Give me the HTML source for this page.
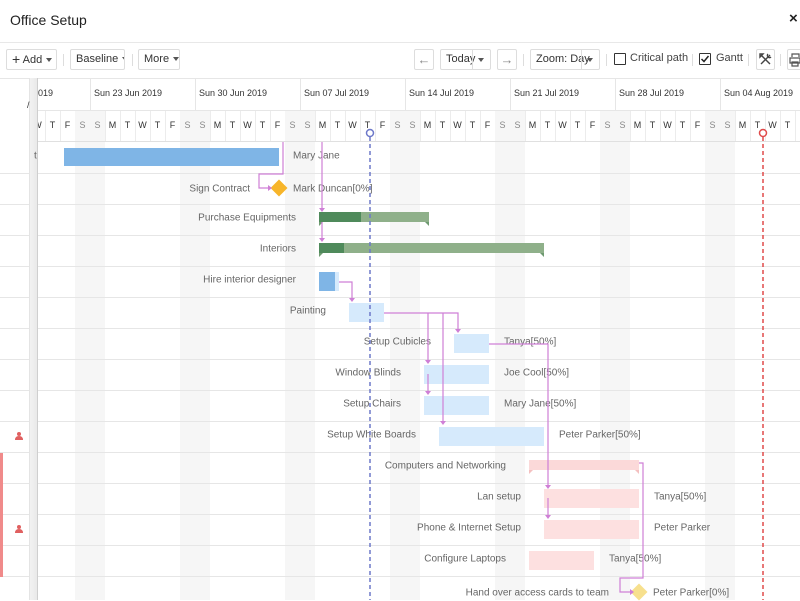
<!DOCTYPE html>
<html><head><meta charset="utf-8">
<style>
*{box-sizing:border-box;margin:0;padding:0}
body{width:800px;height:600px;overflow:hidden;background:#fff;font-family:"Liberation Sans",Arial,sans-serif;position:relative;color:#333}
.a{position:absolute}
.btn{position:absolute;top:49px;height:21px;border:1px solid #ddd;background:#fff;font-size:11px;color:#333;line-height:19px;padding-left:5px;border-radius:2px;white-space:nowrap;overflow:hidden}
.sep{position:absolute;top:54px;width:1px;height:12px;background:#ddd}
.car{display:inline-block;width:0;height:0;border-left:3.5px solid transparent;border-right:3.5px solid transparent;border-top:4px solid #555;vertical-align:middle;margin-left:4px}
.t{position:absolute;font-size:10px;color:#666;white-space:nowrap;transform:translateY(-50%)}
.tr{text-align:right}
.hd{position:absolute;font-size:9px;color:#333;top:88px;white-space:nowrap}
.dl{position:absolute;font-size:9px;top:120px;width:15px;text-align:center;color:#333}
</style></head><body>
<div class="a" style="left:10px;top:12px;font-size:14px;color:#222">Office Setup</div>
<div class="a" style="left:789px;top:10px;font-size:15px;color:#222;font-weight:bold">×</div>
<div class="a" style="left:0;top:42px;width:800px;height:1px;background:#e8e8e8"></div>

<div class="btn" style="left:6px;width:51px"><span style="font-size:14px;vertical-align:-1px">+</span> Add<span class="car"></span></div>
<div class="sep" style="left:63px"></div>
<div class="btn" style="left:70px;width:55px">Baseline<span class="car"></span></div>
<div class="sep" style="left:132px"></div>
<div class="btn" style="left:138px;width:42px">More<span class="car"></span></div>

<div class="btn" style="left:414px;width:20px;padding:0;text-align:center;color:#888;font-size:13px">←</div>
<div class="btn" style="left:440px;width:51px">Today</div>
<div class="a" style="left:472px;top:50px;width:1px;height:19px;background:#ddd"></div>
<div class="a" style="left:474px;top:50px;line-height:19px"><span class="car"></span></div>
<div class="btn" style="left:497px;width:20px;padding:0;text-align:center;color:#888;font-size:13px">→</div>
<div class="sep" style="left:523px"></div>
<div class="btn" style="left:530px;width:70px">Zoom: Day</div>
<div class="a" style="left:581px;top:50px;width:1px;height:19px;background:#ddd"></div>
<div class="a" style="left:583px;top:50px;line-height:19px"><span class="car"></span></div>
<div class="sep" style="left:606px"></div>
<div class="a" style="left:614px;top:53px;width:12px;height:12px;border:1.5px solid #333;border-radius:1px"></div>
<div class="a" style="left:630px;top:52px;font-size:11px;color:#444">Critical path</div>
<div class="sep" style="left:692px"></div>
<div class="a" style="left:699px;top:53px;width:12px;height:12px;border:1.5px solid #333;border-radius:1px"></div>
<svg class="a" style="left:699px;top:53px" width="12" height="12"><path d="M2.5 6 L5 8.5 L9.5 3" stroke="#222" stroke-width="1.5" fill="none"/></svg>
<div class="a" style="left:716px;top:52px;font-size:11px;color:#444">Gantt</div>
<div class="sep" style="left:748px"></div>
<div class="btn" style="left:756px;width:19px;padding:0"></div>
<svg class="a" style="left:758px;top:52px" width="15" height="15"><path d="M3 3 L12 12 M12 3 L3 12 M2 2 l3 0 l-3 3z M10 2 a2 2 0 1 0 3 3" stroke="#444" stroke-width="1.4" fill="none"/></svg>
<div class="sep" style="left:780px"></div>
<div class="btn" style="left:787px;width:20px;padding:0"></div>
<svg class="a" style="left:789px;top:53px" width="12" height="14"><path d="M3 4 V1 H10 V4 M1 5 H11 V10 H1Z M3 9 H9 V13 H3Z" stroke="#555" stroke-width="1.2" fill="none"/></svg>

<div class="a" style="left:0;top:78px;width:800px;height:1px;background:#e6e6e6"></div>
<div id="g" class="a" style="left:38px;top:78px;width:762px;height:522px;overflow:hidden"></div>
<div class="a" style="left:29px;top:78px;width:9px;height:522px;background:linear-gradient(90deg,#f2f2f2,#e8e8e8);border-left:1px solid #e4e4e4"></div>
<div class="a" style="left:37px;top:78px;width:1px;height:522px;background:#cfcfcf"></div>
<div class="a" style="left:27px;top:100px;font-size:9px;color:#333">/</div>
<div id="lg" class="a" style="left:0;top:142px;width:29px;height:458px"></div>
<div class="a" style="left:0;top:453px;width:3px;height:124px;background:#f08a8a"></div>
<svg class="a" style="left:15px;top:432px" width="8" height="8"><circle cx="4" cy="2" r="2" fill="#e06060"/><path d="M0 8 Q0 4 4 4 Q8 4 8 8Z" fill="#e06060"/></svg>
<svg class="a" style="left:15px;top:525px" width="8" height="8"><circle cx="4" cy="2" r="2" fill="#e06060"/><path d="M0 8 Q0 4 4 4 Q8 4 8 8Z" fill="#e06060"/></svg>

<script>
var g=document.getElementById('g'),h='';
var days=['S','M','T','W','T','F','S'];
for(var i=0;i<52;i++){var x=30+i*15-38;var d=days[(i+3)%7];var we=((i+3)%7==0||(i+3)%7==6);
 if(we){h+='<div class="a" style="left:'+x+'px;top:32px;width:15px;height:490px;background:#f6f6f6"></div>';}
 h+='<div class="a" style="left:'+(x+15)+'px;top:32px;width:1px;height:32px;background:#ececec"></div>';
 h+='<div class="dl" style="left:'+x+'px;top:42px;color:'+(we?'#888':'#333')+'">'+d+'</div>';}
var wk=['Sun 23 Jun 2019','Sun 30 Jun 2019','Sun 07 Jul 2019','Sun 14 Jul 2019','Sun 21 Jul 2019','Sun 28 Jul 2019','Sun 04 Aug 2019'];
h+='<div class="hd" style="left:0;top:10px">019</div>';
for(var k=0;k<7;k++){var x=90+k*105-38;h+='<div class="a" style="left:'+x+'px;top:0;width:1px;height:32px;background:#e6e6e6"></div><div class="hd" style="left:'+(x+4)+'px;top:10px">'+wk[k]+'</div>';}
h+='<div class="a" style="left:0;top:32px;width:762px;height:1px;background:#e6e6e6"></div>';
h+='<div class="a" style="left:0;top:63px;width:762px;height:1px;background:#e0e0e0"></div>';
for(var r=1;r<15;r++){h+='<div class="a" style="left:0;top:'+(64+r*31)+'px;width:762px;height:1px;background:#e6e6e6"></div>';}
g.innerHTML=h;
var lg=document.getElementById('lg'),l='';
for(var r=1;r<15;r++){l+='<div class="a" style="left:0;top:'+(r*31)+'px;width:29px;height:1px;background:#e6e6e6"></div>';}
lg.innerHTML=l;
</script>

<div class="a" style="left:64px;top:148px;width:215px;height:18px;background:#7fb5e6"></div>
<div class="t" style="left:293px;top:156px">Mary Jane</div>
<div class="t" style="left:34px;top:156px">t</div>
<div class="t tr" style="right:550px;top:189px">Sign Contract</div>
<div class="a" style="left:273px;top:182px;width:12px;height:12px;background:#f7b52a;transform:rotate(45deg)"></div>
<div class="t" style="left:293px;top:189px">Mark Duncan[0%]</div>

<div class="t tr" style="right:504px;top:218px">Purchase Equipments</div>
<div class="a" style="left:319px;top:212px;width:110px;height:10px;background:#8fb08a"></div>
<div class="a" style="left:319px;top:212px;width:42px;height:10px;background:#4f8a5b"></div>
<div class="t tr" style="right:504px;top:249px">Interiors</div>
<div class="a" style="left:319px;top:243px;width:225px;height:10px;background:#8fb08a"></div>
<div class="a" style="left:319px;top:243px;width:25px;height:10px;background:#4f8a5b"></div>
<svg class="a" style="left:0;top:0" width="800" height="600" pointer-events="none">
<path d="M319 222 l4 0 l-4 4z M429 222 l-4 0 l4 4z M319 253 l4 0 l-4 4z M544 253 l-4 0 l4 4z" fill="#6e9a70"/>
<path d="M529 470 l4 0 l-4 4z M639 470 l-4 0 l4 4z" fill="#f4c0c0"/>
</svg>
<div class="t tr" style="right:504px;top:280px">Hire interior designer</div>
<div class="a" style="left:319px;top:272px;width:20px;height:19px;background:#d6eafc"></div>
<div class="a" style="left:319px;top:272px;width:16px;height:19px;background:#7fb5e6"></div>
<div class="t tr" style="right:474px;top:311px">Painting</div>
<div class="a" style="left:349px;top:303px;width:35px;height:19px;background:#d6eafc"></div>
<div class="t tr" style="right:369px;top:342px">Setup Cubicles</div>
<div class="a" style="left:454px;top:334px;width:35px;height:19px;background:#d6eafc"></div>
<div class="t" style="left:504px;top:342px">Tanya[50%]</div>
<div class="t tr" style="right:399px;top:373px">Window Blinds</div>
<div class="a" style="left:424px;top:365px;width:65px;height:19px;background:#d6eafc"></div>
<div class="t" style="left:504px;top:373px">Joe Cool[50%]</div>
<div class="t tr" style="right:399px;top:404px">Setup Chairs</div>
<div class="a" style="left:424px;top:396px;width:65px;height:19px;background:#d6eafc"></div>
<div class="t" style="left:504px;top:404px">Mary Jane[50%]</div>
<div class="t tr" style="right:384px;top:435px">Setup White Boards</div>
<div class="a" style="left:439px;top:427px;width:105px;height:19px;background:#d6eafc"></div>
<div class="t" style="left:559px;top:435px">Peter Parker[50%]</div>
<div class="t tr" style="right:294px;top:466px">Computers and Networking</div>
<div class="a" style="left:529px;top:460px;width:110px;height:10px;background:#fbd9d9"></div>
<div class="t tr" style="right:279px;top:497px">Lan setup</div>
<div class="a" style="left:544px;top:489px;width:95px;height:19px;background:#fde0e0"></div>
<div class="t" style="left:654px;top:497px">Tanya[50%]</div>
<div class="t tr" style="right:279px;top:528px">Phone &amp; Internet Setup</div>
<div class="a" style="left:544px;top:520px;width:95px;height:19px;background:#fde0e0"></div>
<div class="t" style="left:654px;top:528px">Peter Parker</div>
<div class="t tr" style="right:294px;top:559px">Configure Laptops</div>
<div class="a" style="left:529px;top:551px;width:65px;height:19px;background:#fde0e0"></div>
<div class="t" style="left:609px;top:559px">Tanya[50%]</div>
<div class="t tr" style="right:191px;top:593px">Hand over access cards to team</div>
<div class="a" style="left:633px;top:586px;width:12px;height:12px;background:#f7e08e;transform:rotate(45deg)"></div>
<div class="t" style="left:653px;top:593px">Peter Parker[0%]</div>

<svg class="a" style="left:0;top:0" width="800" height="600">
<g stroke="#cf7fd6" stroke-width="1.2" fill="none">
<path d="M283 142 V174 H259 V188 H268"/>
<path d="M322 142 V209 M322 222 V240"/>
<path d="M339 282 H352 V299"/>
<path d="M384 313 H458 V330 M428 313 V361 M428 374 V392 M443 313 V422"/>
<path d="M489 344 H548 V485 M548 498 V516"/>
<path d="M639 463 H643 V578 H620 V592 H630"/>
</g>
<g fill="#cf7fd6">
<path d="M268 185 l4 3 l-4 3z"/>
<path d="M319 208 h6 l-3 4z M319 238 h6 l-3 4z M349 298 h6 l-3 4z"/>
<path d="M455 329 h6 l-3 4z M425 360 h6 l-3 4z M425 391 h6 l-3 4z M440 421 h6 l-3 4z"/>
<path d="M545 485 h6 l-3 4z M545 515 h6 l-3 4z M630 589 l4 3 l-4 3z"/>
</g>
<line x1="370" y1="137" x2="370" y2="600" stroke="#6d78c9" stroke-width="1.5" stroke-dasharray="4,3"/>
<circle cx="370" cy="133" r="3.5" fill="#fff" stroke="#6d78c9" stroke-width="1.5"/>
<line x1="763" y1="137" x2="763" y2="600" stroke="#e04a4a" stroke-width="1.5" stroke-dasharray="4,3"/>
<circle cx="763" cy="133" r="3.5" fill="#fff" stroke="#e04a4a" stroke-width="1.5"/>
</svg>
</body></html>
